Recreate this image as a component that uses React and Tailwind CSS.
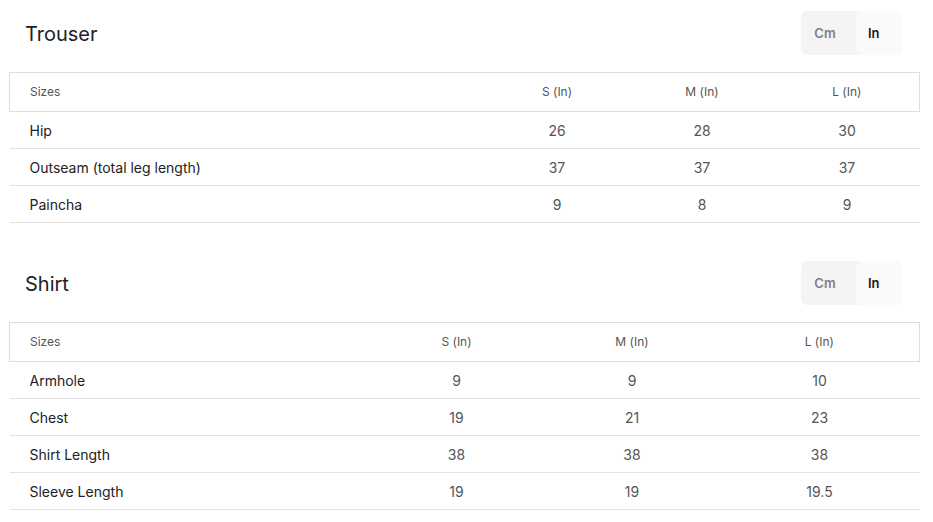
import React, { useState } from "react";

const trouser = {
  title: "Trouser",
  cols: ["w-[475px]", "w-[145px]", "w-[145px]", "w-[145px]"],
  rows: [
    ["Hip", "26", "28", "30"],
    ["Outseam (total leg length)", "37", "37", "37"],
    ["Paincha", "9", "8", "9"],
  ],
};

const shirt = {
  title: "Shirt",
  cols: ["w-[359px]", "w-[176px]", "w-[175px]", "w-[200px]"],
  rows: [
    ["Armhole", "9", "9", "10"],
    ["Chest", "19", "21", "23"],
    ["Shirt Length", "38", "38", "38"],
    ["Sleeve Length", "19", "19", "19.5"],
  ],
};

const UnitToggle = ({ unit, setUnit }) => (
  <div className="flex h-[44px] w-[101px] justify-between rounded-md bg-[#f4f4f4] pt-[2px] text-[13px] font-semibold">
    <button
      onClick={() => setUnit("Cm")}
      className={`w-[48px] rounded-md ${
        unit === "Cm" ? "bg-[#fafafa] text-[#1a1a1a]" : "text-[#808080]"
      }`}
    >
      Cm
    </button>
    <button
      onClick={() => setUnit("In")}
      className={`-mt-[2px] w-[46px] rounded-md pt-[2px] pl-3 text-left ${
        unit === "In" ? "bg-[#fafafa] text-[#1a1a1a]" : "text-[#808080]"
      }`}
    >
      In
    </button>
  </div>
);

const SizeChart = ({ data }) => {
  const [unit, setUnit] = useState("In");

  return (
    <div>
      <div className="flex items-center justify-between px-4">
        <h2 className="pt-[2px] text-[20px] leading-7 text-[#222]">{data.title}</h2>
        <UnitToggle unit={unit} setUnit={setUnit} />
      </div>

      <table className="mt-[17px] w-[calc(100%-1px)] table-fixed border-collapse">
        <colgroup>
          {data.cols.map((c, i) => (
            <col key={i} className={c} />
          ))}
        </colgroup>
        <thead>
          <tr className="border border-[#dedede] text-[12px] leading-4 text-[#555]">
            <th className="py-[11px] pl-5 text-left font-normal">Sizes</th>
            <th className="py-[11px] font-normal">S ({unit})</th>
            <th className="py-[11px] font-normal">M ({unit})</th>
            <th className="py-[11px] font-normal">L ({unit})</th>
          </tr>
        </thead>
        <tbody>
          {data.rows.map((row) => (
            <tr key={row[0]} className="border-b border-[#e2e2e2] text-[14px] leading-5">
              <td className="pt-[9px] pb-[7px] pl-5 text-[#222]">{row[0]}</td>
              {row.slice(1).map((v, i) => (
                <td key={i} className="pt-[9px] pb-[7px] text-center text-[#555]">
                  {v}
                </td>
              ))}
            </tr>
          ))}
        </tbody>
      </table>
    </div>
  );
};

export default function App() {
  return (
    <div
      className="min-h-screen bg-white pt-[11px] pl-[9px] pr-[15px]"
      style={{ fontFamily: "Inter, 'Noto Sans', sans-serif" }}
    >
      <SizeChart data={trouser} />
      <div className="mt-[38px]">
        <SizeChart data={shirt} />
      </div>
    </div>
  );
}
